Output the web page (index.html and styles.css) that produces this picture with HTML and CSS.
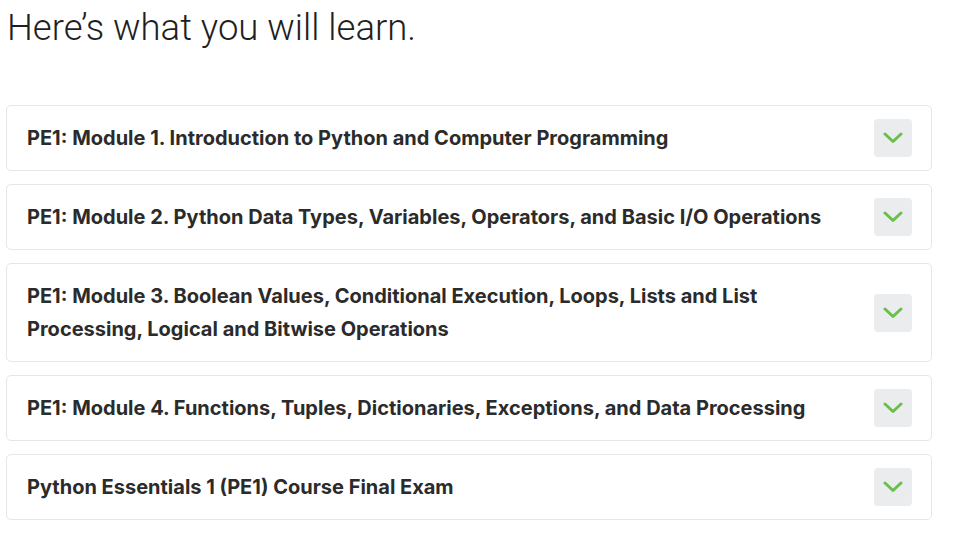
FILE: index.html
```html
<!DOCTYPE html>
<html lang="en">
<head>
<meta charset="utf-8">
<title>Here's what you will learn.</title>
<link rel="stylesheet" href="styles.css">
</head>
<body>
<main class="page">
  <h1 class="title">Here’s what you will learn.</h1>
  <ul class="modules">
    <li class="module">
      <span class="module-name">PE1: Module 1. Introduction to Python and Computer Programming</span>
      <button class="toggle" aria-label="Expand"><svg viewBox="0 0 20 12" width="20" height="12"><path d="M2 2 L10 9.5 L18 2" fill="none" stroke="#6abf4b" stroke-width="3" stroke-linecap="round" stroke-linejoin="round"/></svg></button>
    </li>
    <li class="module">
      <span class="module-name">PE1: Module 2. Python Data Types, Variables, Operators, and Basic I/O Operations</span>
      <button class="toggle" aria-label="Expand"><svg viewBox="0 0 20 12" width="20" height="12"><path d="M2 2 L10 9.5 L18 2" fill="none" stroke="#6abf4b" stroke-width="3" stroke-linecap="round" stroke-linejoin="round"/></svg></button>
    </li>
    <li class="module">
      <span class="module-name">PE1: Module 3. Boolean Values, Conditional Execution, Loops, Lists and List Processing, Logical and Bitwise Operations</span>
      <button class="toggle" aria-label="Expand"><svg viewBox="0 0 20 12" width="20" height="12"><path d="M2 2 L10 9.5 L18 2" fill="none" stroke="#6abf4b" stroke-width="3" stroke-linecap="round" stroke-linejoin="round"/></svg></button>
    </li>
    <li class="module">
      <span class="module-name">PE1: Module 4. Functions, Tuples, Dictionaries, Exceptions, and Data Processing</span>
      <button class="toggle" aria-label="Expand"><svg viewBox="0 0 20 12" width="20" height="12"><path d="M2 2 L10 9.5 L18 2" fill="none" stroke="#6abf4b" stroke-width="3" stroke-linecap="round" stroke-linejoin="round"/></svg></button>
    </li>
    <li class="module">
      <span class="module-name">Python Essentials 1 (PE1) Course Final Exam</span>
      <button class="toggle" aria-label="Expand"><svg viewBox="0 0 20 12" width="20" height="12"><path d="M2 2 L10 9.5 L18 2" fill="none" stroke="#6abf4b" stroke-width="3" stroke-linecap="round" stroke-linejoin="round"/></svg></button>
    </li>
  </ul>
</main>
</body>
</html>
```
FILE: styles.css
```css
html, body {
  margin: 0;
  padding: 0;
  background: #ffffff;
}
.page {
  width: 926px;
  padding: 0 0 0 6px;
}
.title {
  margin: 0;
  padding: 6px 0 0 1px;
  font-family: Roboto, "Liberation Sans", sans-serif;
  font-weight: 300;
  font-size: 36.5px;
  line-height: 44px;
  color: #1f1f1f;
}
.modules {
  list-style: none;
  margin: 55px 0 0 0;
  padding: 0;
  display: flex;
  flex-direction: column;
  gap: 13px;
}
.module {
  display: flex;
  align-items: center;
  justify-content: space-between;
  gap: 40px;
  padding: 0 19px 0 20px;
  border: 1px solid #e6e6e6;
  border-radius: 5px;
  background: #fff;
}
.module-name {
  padding: 15.5px 0;
  font-family: Inter, "Noto Sans", sans-serif;
  font-weight: 700;
  font-size: 20px;
  line-height: 33px;
  color: #2b2b2b;
}
.toggle {
  flex: none;
  width: 38px;
  height: 38px;
  border: 0;
  border-radius: 4px;
  background: #ebeced;
  display: flex;
  align-items: center;
  justify-content: center;
  padding: 0;
}
```
